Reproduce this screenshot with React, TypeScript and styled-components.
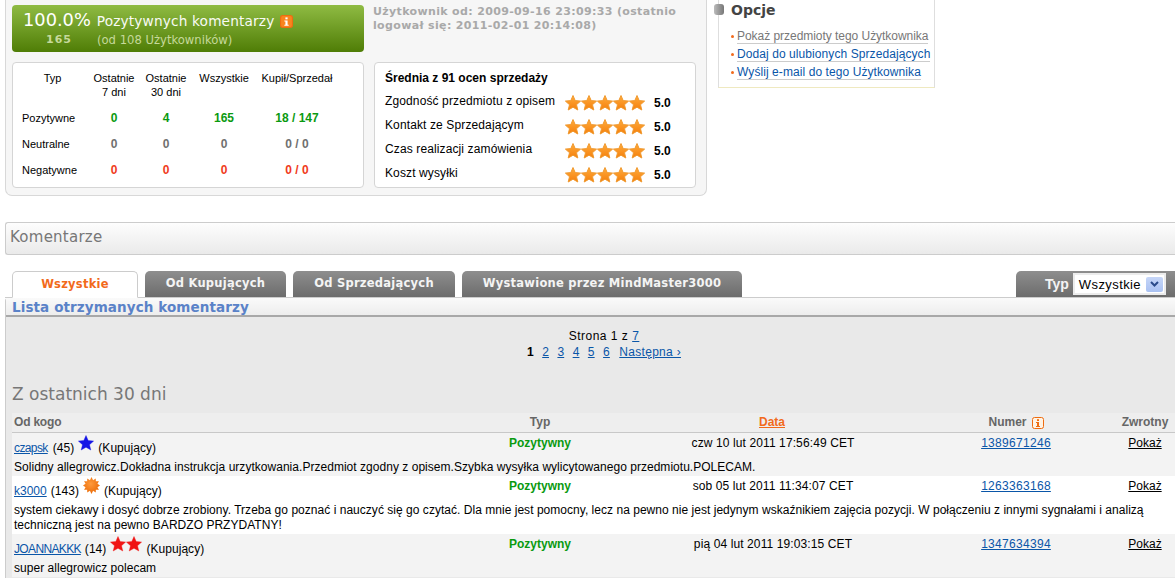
import React from "react";
import styled, { createGlobalStyle } from "styled-components";

const Global = createGlobalStyle`
  html, body { margin: 0; padding: 0; background: #fff; overflow: hidden; }
  body { font-family: "Liberation Sans", Arial, sans-serif; font-size: 12px; color: #000; }
  a { color: #0a56a8; }
`;

const Page = styled.div`
  width: 1175px;
  height: 578px;
  overflow: hidden;
  display: flex;
  flex-direction: column;
`;
const Top = styled.div`
  display: flex;
  align-items: flex-start;
  padding-left: 5px;
  height: 222px;
  flex: none;
`;
const Summary = styled.div`
  width: 702px;
  height: 196px;
  box-sizing: border-box;
  background: #f6f6f6;
  border: 1px solid #d8d8d8;
  border-top: none;
  border-radius: 0 0 7px 7px;
  padding: 5px 10px 0 6px;
  display: grid;
  grid-template-columns: 352px 322px;
  column-gap: 10px;
  grid-template-rows: 47px 126px;
  row-gap: 10px;
`;
const GreenBox = styled.div`
  background: linear-gradient(#8fbb43, #4f7d06);
  border-radius: 4px;
  color: #fff;
  font-family: "DejaVu Sans", Verdana, sans-serif;
  padding: 4px 0 0 11px;
  box-sizing: border-box;
`;
const GreenTop = styled.div`
  display: flex;
  align-items: baseline;
  height: 24px;
`;
const Percent = styled.span`
  font-size: 17.8px;
  margin-right: 6px;
`;
const GreenLabel = styled.span`
  font-size: 13.7px;
  letter-spacing: 0.15px;
  opacity: 0.95;
`;
const InfoWrap = styled.span`
  margin-left: 6px;
  align-self: center;
  display: inline-flex;
`;
const GreenSub = styled.div`
  display: flex;
  font-size: 11.6px;
  color: #c6d99b;
`;
const SubCount = styled.span`
  font-weight: bold;
  font-size: 11px;
  letter-spacing: 1px;
  width: 74px;
  padding-left: 23px;
  box-sizing: border-box;
`;
const Since = styled.div`
  font-family: "DejaVu Sans", Verdana, sans-serif;
  font-size: 11px;
  font-weight: bold;
  letter-spacing: 0.35px;
  line-height: 14px;
  color: #a9a9a9;
  padding: 0;
  margin-left: -1px;
`;
const Card = styled.div`
  background: #fff;
  border: 1px solid #d5d5d5;
  border-radius: 4px;
  box-sizing: border-box;
`;
const StatsCard = styled(Card)`
  display: grid;
  grid-template-columns: 79px 44px 60px 56px 90px;
  grid-template-rows: 36px 26px 26px 26px;
  padding: 8px 0 0 0;
  font-size: 11px;
  text-align: center;
  line-height: 14px;
`;
const RowName = styled.div`
  text-align: left;
  padding-left: 9px;
  padding-top: 4px;
`;
const Val = styled.div<{ $c: string }>`
  color: ${(p) => p.$c};
  font-weight: bold;
  font-size: 12px;
  padding-top: 4px;
`;
const RatingCard = styled(Card)`
  padding: 6px 0 0 10px;
`;
const RatingTitle = styled.div`
  font-weight: bold;
  font-size: 12px;
  height: 21px;
  line-height: 18px;
`;
const RatingRow = styled.div`
  display: flex;
  align-items: center;
  height: 24px;
`;
const RatingName = styled.span`
  width: 180px;
  letter-spacing: 0.12px;
  position: relative;
  top: -1px;
`;
const Stars = styled.span`
  display: inline-flex;
  width: 89px;
  position: relative;
  top: 1px;
`;
const RatingVal = styled.span`
  font-weight: bold;
  position: relative;
  top: 1px;
`;
const Options = styled.div`
  margin-left: 11px;
  width: 217px;
  height: 88px;
  box-sizing: border-box;
  border: 1px solid #dedede;
  border-top: none;
  border-bottom: 1px solid #efe9c0;
  background: #fff;
  position: relative;
  padding: 0 0 0 12px;
`;
const OptBullet = styled.span`
  position: absolute;
  left: -5px;
  top: 4px;
  width: 10px;
  height: 11px;
  border-radius: 3px;
  background: linear-gradient(90deg, #bbb, #777);
`;
const OptTitle = styled.div`
  font-family: "DejaVu Sans", Verdana, sans-serif;
  font-weight: bold;
  font-size: 14px;
  color: #444;
  height: 27px;
  line-height: 20px;
`;
const OptItem = styled.div`
  display: flex;
  align-items: center;
  height: 18px;
  &::before {
    content: "";
    width: 3px;
    height: 3px;
    border-radius: 50%;
    background: #f26a1b;
    margin-right: 3px;
  }
`;
const OptLink = styled.a<{ $muted?: boolean }>`
  color: ${(p) => (p.$muted ? "#777" : "#0a56a8")};
  text-decoration: none;
  border-bottom: 1px solid #ccc;
  line-height: 14px;
  letter-spacing: ${(p) => (p.$muted ? "-0.04px" : "0.08px")};
`;
const SectionBar = styled.div`
  margin-left: 5px;
  height: 33px;
  box-sizing: border-box;
  flex: none;
  border: 1px solid #ccc;
  border-right: none;
  border-radius: 3px 0 0 3px;
  background: linear-gradient(#fdfdfd, #eaeaea);
  font-family: "DejaVu Sans", Verdana, sans-serif;
  font-size: 15px;
  letter-spacing: 0.25px;
  color: #777;
  padding: 5px 0 0 4px;
`;
const TabsRow = styled.div`
  display: flex;
  align-items: flex-end;
  height: 43px;
  flex: none;
  gap: 7px;
  border-bottom: 1px solid #ccc;
  margin-left: 5px;
  padding-left: 7px;
  box-sizing: border-box;
`;
const Tab = styled.div<{ $active?: boolean; $w: number }>`
  width: ${(p) => p.$w}px;
  box-sizing: border-box;
  margin-bottom: ${(p) => (p.$active ? "-1px" : "0")};
  height: ${(p) => (p.$active ? "27px" : "26px")};
  border-radius: 5px 5px 0 0;
  text-align: center;
  font-family: "DejaVu Sans", Verdana, sans-serif;
  font-weight: bold;
  font-size: 11.5px;
  letter-spacing: 0.25px;
  line-height: 24px;
  color: ${(p) => (p.$active ? "#f26a1b" : "#f4f4f4")};
  background: ${(p) => (p.$active ? "#fff" : "linear-gradient(#8e8e8e, #6c6c6c)")};
  border: ${(p) => (p.$active ? "1px solid #ccc" : "none")};
  border-bottom: ${(p) => (p.$active ? "1px solid #fff" : "none")};
`;
const TypeTab = styled.div`
  margin-left: auto;
  width: 159px;
  height: 26px;
  border-radius: 5px 0 0 0;
  background: linear-gradient(#8e8e8e, #6c6c6c);
  display: flex;
  align-items: center;
  box-sizing: border-box;
  padding-left: 29px;
  color: #f4f4f4;
  font-weight: bold;
  font-size: 14px;
`;
const Select = styled.div`
  margin-left: 4px;
  width: 93px;
  height: 22px;
  background: #fff;
  box-sizing: border-box;
  border: 2px solid #ececec;
  color: #000;
  font-weight: normal;
  font-size: 13px;
  letter-spacing: 0.4px;
  display: flex;
  align-items: center;
  justify-content: space-between;
  padding: 0 1px 0 4px;
`;
const SelectArrow = styled.span`
  width: 17px;
  height: 15px;
  border-radius: 2px;
  background: linear-gradient(#c6d6f8, #a9c1f2);
  display: inline-flex;
  align-items: center;
  justify-content: center;
`;
const Panel = styled.div`
  flex: 1;
  margin-left: 5px;
  border-left: 1px solid #ccc;
  border-radius: 3px 0 0 0;
  background: #e9e9e9;
  display: flex;
  flex-direction: column;
  min-height: 0;
`;
const ListHeader = styled.div`
  height: 17px;
  flex: none;
  background: linear-gradient(#fafafa, #ededed);
  border-bottom: 2px solid #a8a8a8;
  padding-left: 6px;
  font-family: "DejaVu Sans", Verdana, sans-serif;
  font-weight: bold;
  font-size: 13.5px;
  letter-spacing: 0.1px;
  color: #5a82c8;
  line-height: 18px;
`;
const Pager = styled.div`
  height: 34px;
  padding-top: 11px;
  flex: none;
  text-align: center;
  line-height: 16px;
  font-size: 12px;
  width: 1196px;
  letter-spacing: 0.1px;
`;
const PagerFirst = styled.div`
  letter-spacing: 0.5px;
`;
const PagerLine = styled.div``;
const PageNum = styled.a`
  margin-left: 5px;
`;
const NextLink = styled.a`
  margin-left: 6px;
  letter-spacing: 0.3px;
`;
const PeriodTitle = styled.div`
  flex: none;
  height: 51px;
  box-sizing: border-box;
  padding: 21px 0 0 6px;
  font-family: "DejaVu Sans", Verdana, sans-serif;
  font-size: 17px;
  color: #777;
  line-height: 22px;
`;
const Grid = `
  display: grid;
  grid-template-columns: 441px 174px 290px 198px 60px;
`;
const HeadRow = styled.div`
  ${Grid}
  margin-left: 6px;
  flex: none;
  height: 20px;
  box-sizing: border-box;
  background: #eeeeee;
  border-bottom: 1px solid #c8c8c8;
  font-weight: bold;
  color: #666;
  line-height: 19px;
  text-align: center;
`;
const HeadFirst = styled.div`
  text-align: left;
  padding-left: 2px;
  letter-spacing: -0.2px;
`;
const DataHead = styled.a`
  color: #f26a1b;
`;
const HeadNum = styled.div`
  display: flex;
  align-items: center;
  justify-content: center;
  gap: 5px;
`;
const Comment = styled.div<{ $alt?: boolean }>`
  margin-left: 6px;
  flex: none;
  background: ${(p) => (p.$alt ? "#f3f3f3" : "#fff")};
  padding-bottom: 1px;
`;
const CommentTop = styled.div`
  ${Grid}
  height: 24px;
  text-align: center;
  line-height: 20px;
`;
const Who = styled.div`
  text-align: left;
  padding-left: 2px;
  display: flex;
  align-items: flex-end;
  height: 24px;
  line-height: 18px;
  letter-spacing: 0.05px;
`;
const UserLink = styled.a<{ $ls?: number }>`
  letter-spacing: ${(p) => p.$ls ?? 0}px;
`;
const Feedback = styled.span<{ $ml?: number }>`
  margin-left: ${(p) => p.$ml ?? 3}px;
`;
const Badge = styled.span`
  display: inline-flex;
  margin: 0 4px 6px 4px;
`;
const Positive = styled.div`
  color: #0a9a10;
  font-weight: bold;
`;
const DateCell = styled.div`
  letter-spacing: 0.11px;
  padding-left: 2px;
`;
const NumberLink = styled.a`
  letter-spacing: 0.3px;
`;
const Show = styled.a`
  color: #000;
`;
const CommentText = styled.div`
  padding: 3px 2px 0 2px;
  line-height: 15px;
  letter-spacing: 0.03px;
`;

const starPts = "8,0.5 10.2,5.6 15.6,6.1 11.5,9.7 12.8,15 8,12.2 3.2,15 4.5,9.7 0.4,6.1 5.8,5.6";

const RateStar = ({ id }: { id: string }) => (
  <svg width="16" height="16" viewBox="0 0 16 16">
    <defs>
      <linearGradient id={id} x1="0" y1="0" x2="0" y2="1">
        <stop offset="0" stopColor="#ffac3c" />
        <stop offset="1" stopColor="#f57f0c" />
      </linearGradient>
    </defs>
    <polygon points={starPts} fill={`url(#${id})`} stroke="#f09a30" strokeWidth="1" strokeLinejoin="round" />
  </svg>
);

const FiveStars = ({ row }: { row: number }) => (
  <Stars>
    {[0, 1, 2, 3, 4].map((i) => (
      <RateStar key={i} id={`rs${row}${i}`} />
    ))}
  </Stars>
);

const BadgeStar = ({ color, size = 16 }: { color: string; size?: number }) => (
  <svg width={size} height={size} viewBox="0 0 16 16">
    <polygon points={starPts} fill={color} stroke={color} strokeWidth="0.4" />
  </svg>
);

const Sun = () => (
  <svg width="17" height="17" viewBox="0 0 16 16">
    <defs>
      <radialGradient id="sun" cx="0.45" cy="0.4" r="0.6">
        <stop offset="0" stopColor="#ff9a3c" />
        <stop offset="1" stopColor="#ea6a06" />
      </radialGradient>
    </defs>
    <polygon
      fill="url(#sun)"
      points="8,0 9.5,3 12,1.3 12.1,4 15,4 13.6,6.4 16,8 13.6,9.6 15,12 12.1,12 12,14.7 9.5,13 8,16 6.5,13 4,14.7 3.9,12 1,12 2.4,9.6 0,8 2.4,6.4 1,4 3.9,4 4,1.3 6.5,3"
    />
  </svg>
);

const InfoIcon = ({ filled }: { filled?: boolean }) => (
  <svg width={filled ? 13 : 12} height={filled ? 13 : 12} viewBox="0 0 12 12">
    <rect x="0.5" y="0.5" width="11" height="11" rx="2" fill={filled ? "#f8841e" : "#fff3e4"} stroke="#ee6c10" />
    <rect x="5" y="2.2" width="2" height="1.8" fill={filled ? "#fff" : "#ee6c10"} />
    <path d="M4 5h3v4h1v1H4V9h1V6H4z" fill={filled ? "#fff" : "#ee6c10"} />
  </svg>
);

const stats: [string, string, string, string, string, string][] = [
  ["Pozytywne", "0", "4", "165", "18 / 147", "#0a9a10"],
  ["Neutralne", "0", "0", "0", "0 / 0", "#707070"],
  ["Negatywne", "0", "0", "0", "0 / 0", "#f03a20"],
];

const ratings = ["Zgodność przedmiotu z opisem", "Kontakt ze Sprzedającym", "Czas realizacji zamówienia", "Koszt wysyłki"];

export default function App() {
  return (
    <Page>
      <Global />
      <Top>
        <Summary>
          <GreenBox>
            <GreenTop>
              <Percent>100.0%</Percent>
              <GreenLabel>Pozytywnych komentarzy</GreenLabel>
              <InfoWrap>
                <InfoIcon filled />
              </InfoWrap>
            </GreenTop>
            <GreenSub>
              <SubCount>165</SubCount>
              <span>(od 108 Użytkowników)</span>
            </GreenSub>
          </GreenBox>
          <Since>
            Użytkownik od: 2009-09-16 23:09:33 (ostatnio
            <br />
            logował się: 2011-02-01 20:14:08)
          </Since>
          <StatsCard>
            <div>Typ</div>
            <div>
              Ostatnie
              <br />7 dni
            </div>
            <div>
              Ostatnie
              <br />
              30 dni
            </div>
            <div>Wszystkie</div>
            <div>Kupił/Sprzedał</div>
            {stats.map((r) => (
              <React.Fragment key={r[0]}>
                <RowName>{r[0]}</RowName>
                <Val $c={r[5]}>{r[1]}</Val>
                <Val $c={r[5]}>{r[2]}</Val>
                <Val $c={r[5]}>{r[3]}</Val>
                <Val $c={r[5]}>{r[4]}</Val>
              </React.Fragment>
            ))}
          </StatsCard>
          <RatingCard>
            <RatingTitle>Średnia z 91 ocen sprzedaży</RatingTitle>
            {ratings.map((name, i) => (
              <RatingRow key={name}>
                <RatingName>{name}</RatingName>
                <FiveStars row={i} />
                <RatingVal>5.0</RatingVal>
              </RatingRow>
            ))}
          </RatingCard>
        </Summary>
        <Options>
          <OptBullet />
          <OptTitle>Opcje</OptTitle>
          <OptItem>
            <OptLink $muted>Pokaż przedmioty tego Użytkownika</OptLink>
          </OptItem>
          <OptItem>
            <OptLink>Dodaj do ulubionych Sprzedających</OptLink>
          </OptItem>
          <OptItem>
            <OptLink>Wyślij e-mail do tego Użytkownika</OptLink>
          </OptItem>
        </Options>
      </Top>
      <SectionBar>Komentarze</SectionBar>
      <TabsRow>
        <Tab $active $w={126}>Wszystkie</Tab>
        <Tab $w={141}>Od Kupujących</Tab>
        <Tab $w={162}>Od Sprzedających</Tab>
        <Tab $w={280}>Wystawione przez MindMaster3000</Tab>
        <TypeTab>
          Typ
          <Select>
            Wszystkie
            <SelectArrow>
              <svg width="9" height="7" viewBox="0 0 9 7">
                <path d="M1 1l3.5 3.5L8 1" fill="none" stroke="#2a4a8a" strokeWidth="2" />
              </svg>
            </SelectArrow>
          </Select>
        </TypeTab>
      </TabsRow>
      <Panel>
        <ListHeader>Lista otrzymanych komentarzy</ListHeader>
        <Pager>
          <PagerFirst>
            Strona 1 z <a href="#">7</a>
          </PagerFirst>
          <PagerLine>
            <b>1</b> <PageNum href="#">2</PageNum> <PageNum href="#">3</PageNum> <PageNum href="#">4</PageNum>{" "}
            <PageNum href="#">5</PageNum> <PageNum href="#">6</PageNum> <NextLink href="#">Następna ›</NextLink>
          </PagerLine>
        </Pager>
        <PeriodTitle>Z ostatnich 30 dni</PeriodTitle>
        <HeadRow>
          <HeadFirst>Od kogo</HeadFirst>
          <div>Typ</div>
          <div>
            <DataHead href="#">Data</DataHead>
          </div>
          <HeadNum>
            Numer <InfoIcon />
          </HeadNum>
          <div>Zwrotny</div>
        </HeadRow>
        <Comment $alt>
          <CommentTop>
            <Who>
              <UserLink href="#" $ls={-0.6}>czapsk</UserLink>
              <Feedback $ml={5}>(45)</Feedback>
              <Badge>
                <BadgeStar color="#1414e6" />
              </Badge>
              (Kupujący)
            </Who>
            <Positive>Pozytywny</Positive>
            <DateCell>czw 10 lut 2011 17:56:49 CET</DateCell>
            <div>
              <NumberLink href="#">1389671246</NumberLink>
            </div>
            <div>
              <Show href="#">Pokaż</Show>
            </div>
          </CommentTop>
          <CommentText>Solidny allegrowicz.Dokładna instrukcja urzytkowania.Przedmiot zgodny z opisem.Szybka wysyłka wylicytowanego przedmiotu.POLECAM.</CommentText>
        </Comment>
        <Comment>
          <CommentTop>
            <Who>
              <UserLink href="#">k3000</UserLink>
              <Feedback $ml={4}>(143)</Feedback>
              <Badge>
                <Sun />
              </Badge>
              (Kupujący)
            </Who>
            <Positive>Pozytywny</Positive>
            <DateCell>sob 05 lut 2011 11:34:07 CET</DateCell>
            <div>
              <NumberLink href="#">1263363168</NumberLink>
            </div>
            <div>
              <Show href="#">Pokaż</Show>
            </div>
          </CommentTop>
          <CommentText>
            system ciekawy i dosyć dobrze zrobiony. Trzeba go poznać i nauczyć się go czytać. Dla mnie jest pomocny, lecz na pewno nie jest jedynym wskaźnikiem zajęcia pozycji. W połączeniu z innymi sygnałami i analizą
            <br />
            techniczną jest na pewno BARDZO PRZYDATNY!
          </CommentText>
        </Comment>
        <Comment $alt>
          <CommentTop>
            <Who>
              <UserLink href="#" $ls={-0.65}>JOANNAKKK</UserLink>
              <Feedback $ml={4}>(14)</Feedback>
              <Badge>
                <BadgeStar color="#f01414" />
                <BadgeStar color="#f01414" />
              </Badge>
              (Kupujący)
            </Who>
            <Positive>Pozytywny</Positive>
            <DateCell>pią 04 lut 2011 19:03:15 CET</DateCell>
            <div>
              <NumberLink href="#">1347634394</NumberLink>
            </div>
            <div>
              <Show href="#">Pokaż</Show>
            </div>
          </CommentTop>
          <CommentText>super allegrowicz polecam</CommentText>
        </Comment>
      </Panel>
    </Page>
  );
}
